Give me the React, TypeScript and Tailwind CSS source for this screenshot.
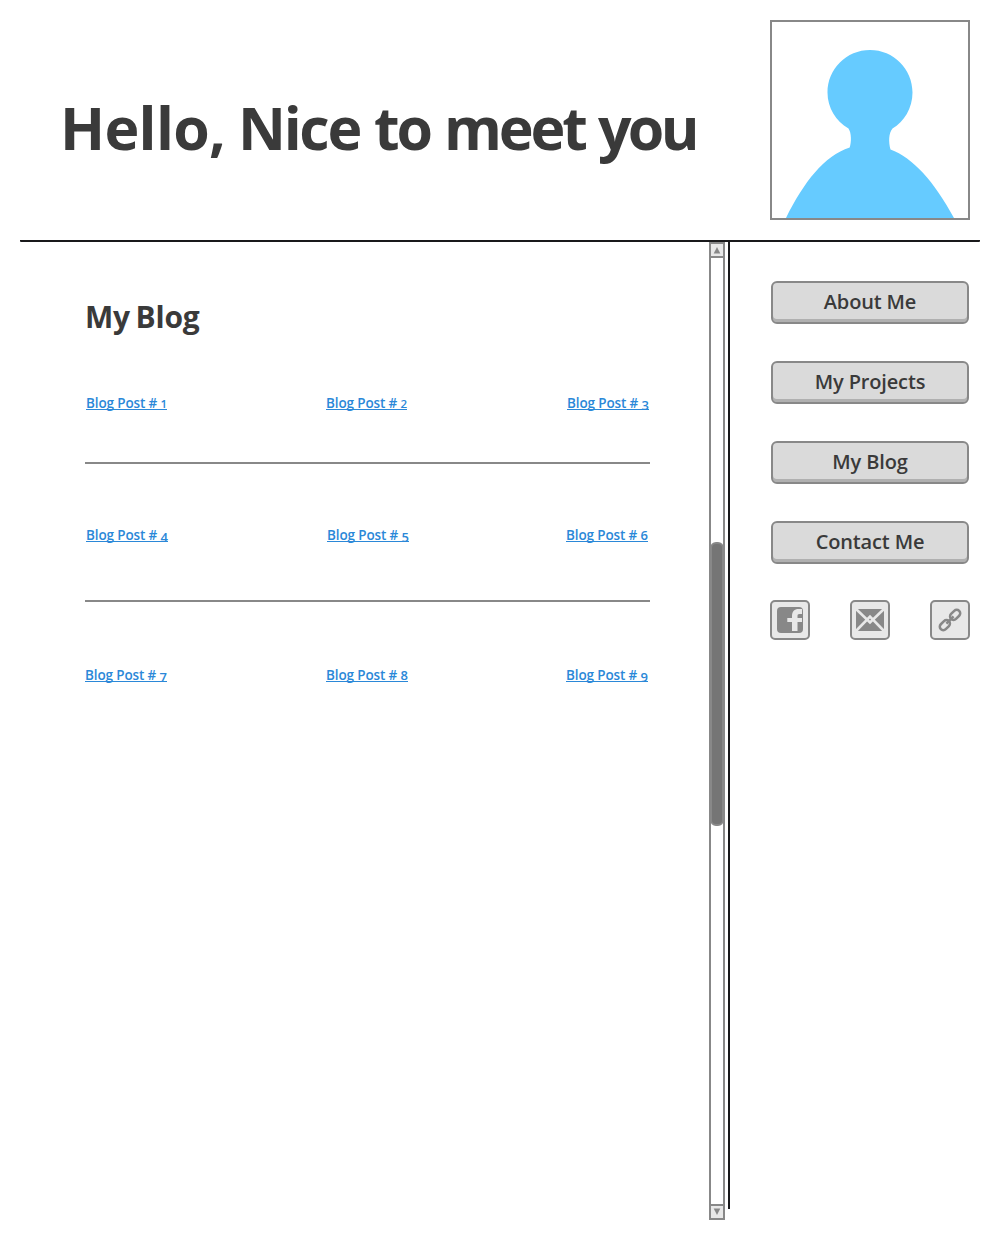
import type { ReactNode } from "react";

const navItems = ["About Me", "My Projects", "My Blog", "Contact Me"];

const titleWords = [
  { text: "Hello,", style: "w-[178px] tracking-[-0.7px]" },
  { text: "Nice", style: "w-[136px] tracking-[-2.3px]" },
  { text: "to", style: "w-[70px] tracking-[-3px]" },
  { text: "meet", style: "w-[154px] tracking-[-3.1px]" },
  { text: "you", style: "w-[100px] tracking-[-3.7px]" },
];

type Post = { n: number; indent: string; digit: string };

const old = "relative top-[2px] text-[13px]";
const small = "text-[11.5px]";
const tall = "text-[13px]";

const rows: { box: string; posts: Post[] }[] = [
  {
    box: "h-[71px] mt-[53px] border-b-2",
    posts: [
      { n: 1, indent: "ml-px", digit: small },
      { n: 2, indent: "ml-0", digit: small },
      { n: 3, indent: "ml-px", digit: old },
    ],
  },
  {
    box: "h-[77px] mt-[61px] border-b-2",
    posts: [
      { n: 4, indent: "ml-px", digit: old },
      { n: 5, indent: "ml-px", digit: old },
      { n: 6, indent: "ml-0", digit: tall },
    ],
  },
  {
    box: "h-[84px] mt-[63px]",
    posts: [
      { n: 7, indent: "ml-0", digit: old },
      { n: 8, indent: "ml-0", digit: tall },
      { n: 9, indent: "ml-0", digit: old },
    ],
  },
];

function PostLink({ post }: { post: Post }) {
  return (
    <a
      href="#"
      className={`${post.indent} h-[20px] w-max whitespace-nowrap text-[13.5px] leading-[20px] font-semibold tracking-[-0.13px] text-[#2b88d8]`}
    >
      <span className="block h-[17px] border-b border-[#2b88d8]">
        Blog Post # <span className={post.digit}>{post.n}</span>
      </span>
    </a>
  );
}

function Avatar() {
  return (
    <div className="h-[200px] w-[200px] shrink-0 border-2 border-[#888]">
      <svg viewBox="2 2 196 196" className="block h-full w-full" fill="#66cbff">
        <path d="M100 30C76.500 30 57.500 49 57.500 72.500C57.500 88 66 101 78.500 108.500C81.500 113 81.500 122 79.700 127.500C54 136 34 162 16 198H184C164 161 143 138 120.500 129.500C118.500 122 118.500 113 122.500 108.500C134 102 142.500 88 142.500 72.500C142.500 49 123.500 30 100 30Z" />
      </svg>
    </div>
  );
}

function Scrollbar() {
  return (
    <div className="flex h-[978px] w-4 shrink-0 flex-col border-2 border-[#888]">
      <div className="flex h-[14px] shrink-0 items-center justify-center border-b-2 border-[#888] bg-[#e8e8e8]">
        <svg width="8" height="8" viewBox="0 0 8 8" fill="#888"><path d="M4 1L7.300 7.500H.7Z" /></svg>
      </div>
      <div className="mt-[284px] -mx-px h-[284px] shrink-0 rounded-[6px] border-2 border-[#888] bg-[#757575]" />
      <div className="mt-auto flex h-[14px] shrink-0 items-center justify-center border-t-2 border-[#888] bg-[#e8e8e8]">
        <svg width="8" height="8" viewBox="0 0 8 8" fill="#888"><path d="M.7 .5H7.300L4 7Z" /></svg>
      </div>
    </div>
  );
}

function IconButton({ label, children }: { label: string; children: ReactNode }) {
  return (
    <button aria-label={label} className="h-10 w-10 rounded-[5px] border-2 border-[#888] bg-[#e8e8e8]">
      <svg viewBox="2 2 36 36" className="block h-9 w-9">{children}</svg>
    </button>
  );
}

export default function App() {
  return (
    <div className="h-[1240px] w-[1000px] overflow-hidden bg-white px-5 font-['Open_Sans','Noto_Sans',sans-serif] text-[#3a3a3a]">
      <header className="flex h-[242px] items-start justify-between rounded-[1px] border-b-2 border-[#19191b] pt-5 pr-[10px] pl-10">
        <h1 className="mt-[67px] flex text-[59px] leading-[80px] font-bold whitespace-nowrap">
          {titleWords.map((w) => (
            <span key={w.text} className={w.style}>{w.text} </span>
          ))}
        </h1>
        <Avatar />
      </header>
      <div className="flex items-start">
        <main className="w-[689px] shrink-0 pt-[52px] pl-[65px]">
          <h2 className="h-[46px] text-[30px] leading-[46px] font-bold tracking-[-0.2px] [word-spacing:-2px]">My Blog</h2>
          {rows.map((row, i) => (
            <section
              key={i}
              className={`grid w-[565px] grid-cols-[241px_240px_84px] border-[#888] ${row.box}`}
            >
              {row.posts.map((p) => (
                <PostLink key={p.n} post={p} />
              ))}
            </section>
          ))}
        </main>
        <Scrollbar />
        <aside className="ml-[3px] h-[967px] border-l-2 border-[#19191b] pt-[39px] pl-10">
          <nav className="flex w-[200px] flex-col items-center gap-[37px]">
            {navItems.map((item) => (
              <button
                key={item}
                className="h-[43px] w-[198px] rounded-[6px] border-2 border-[#888] bg-[#dadada] pb-[2px] text-[20px] leading-[36px] font-semibold tracking-[-0.15px] shadow-[inset_0_-3px_0_#b0b0b0]"
              >
                {item}
              </button>
            ))}
          </nav>
          <div className="mt-9 flex w-[200px] justify-between">
            <IconButton label="Facebook">
              <rect x="7" y="7" width="26" height="26" rx="4" fill="#888" />
              <path d="M22 31V22H17.300V18H22V16C22 11.500 24.500 9 28.500 9H32V14H29.500C27.800 14 27.500 14.800 27.500 16.200V18H32V22H27.500V31Z" fill="#e8e8e8" />
            </IconButton>
            <IconButton label="Email">
              <path d="M6 9H34V31H6Z" fill="#888" />
              <path d="M5.500 8.500L20 22.500L34.500 8.500M5.500 31.500L20 16.500L34.500 31.500" stroke="#e8e8e8" strokeWidth="2.600" fill="none" />
            </IconButton>
            <IconButton label="Link">
              <g transform="rotate(-45 20 20)" fill="none" stroke="#888" strokeWidth="2.500">
                <rect x="7" y="16.500" width="11.500" height="7" rx="3.500" />
                <rect x="21.500" y="16.500" width="11.500" height="7" rx="3.500" />
                <path d="M15 20H25" />
              </g>
            </IconButton>
          </div>
        </aside>
      </div>
    </div>
  );
}
